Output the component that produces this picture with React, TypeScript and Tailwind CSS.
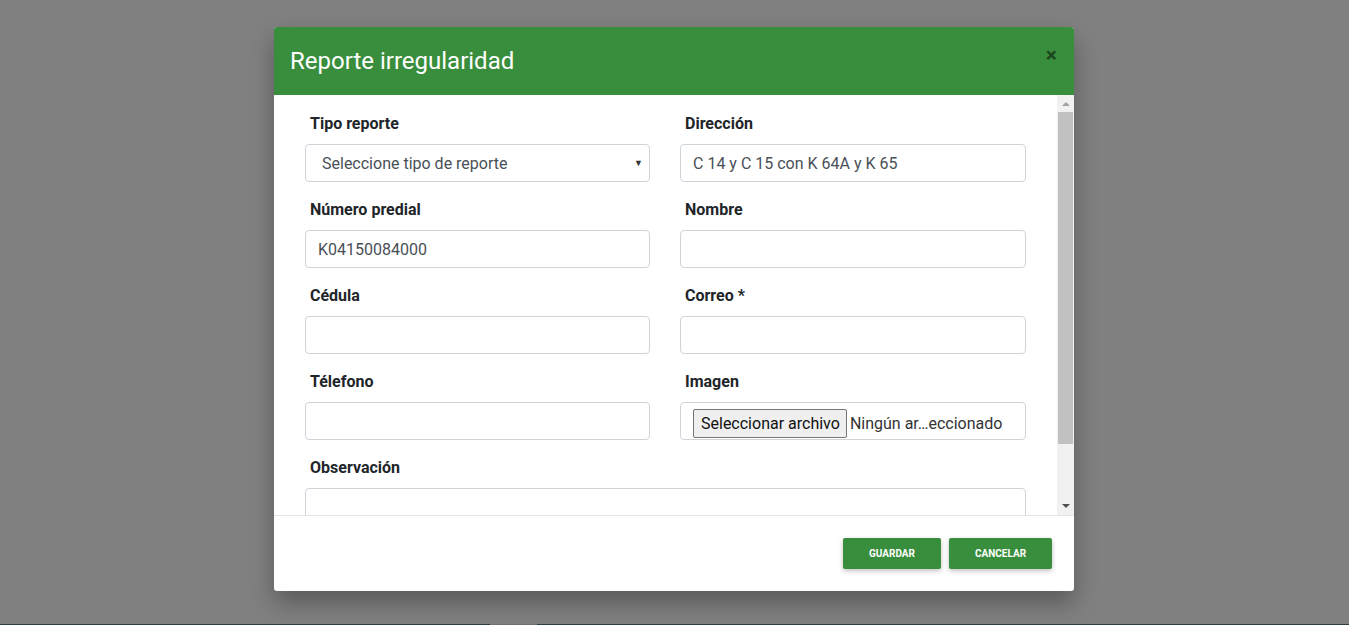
import React from "react";

const font = { fontFamily: "Roboto, 'Liberation Sans', sans-serif" };

function Label({ children }: { children: React.ReactNode }) {
  return (
    <div className="h-6 leading-6 pl-[5px] text-[16px] font-bold text-[#212529] mb-2">{children}</div>
  );
}

function Input({ value }: { value?: string }) {
  return (
    <div className="h-[38px] border border-[#ced4da] rounded-[4px] bg-white flex items-center px-3 pt-px text-[16px] text-[#495057]">
      {value}
    </div>
  );
}

function ScrollBar() {
  return (
    <div className="w-[17px] h-full bg-[#f1f1f1] flex flex-col items-center">
      <div className="h-[17px] w-full flex items-center justify-center">
        <svg width="8" height="5" viewBox="0 0 8 5">
          <path d="M0 5 L4 1 L8 5 Z" fill="#a3a3a3" />
        </svg>
      </div>
      <div className="w-[15px] h-[332px] bg-[#c1c1c1]" />
      <div className="flex-1" />
      <div className="h-[17px] w-full flex items-center justify-center">
        <svg width="8" height="5" viewBox="0 0 8 5">
          <path d="M0 0 L8 0 L4 4 Z" fill="#505050" />
        </svg>
      </div>
    </div>
  );
}

export default function App() {
  return (
    <div className="w-[1349px] h-[625px] bg-[#808080] flex flex-col overflow-hidden" style={font}>
      <div className="flex-1 flex pl-[274px] pt-[27px]">
        <div className="w-[800px] h-[564px] bg-white rounded-[3px] shadow-[0_12px_24px_rgba(0,0,0,0.3)] flex flex-col overflow-hidden">
          <div className="h-[68px] bg-[#388e3c] flex items-start pl-4 pr-[17px]">
            <div className="flex-1 text-white text-[24px] leading-[68px]">Reporte irregularidad</div>
            <div className="mt-[18px] text-[21px] font-bold leading-none text-black opacity-50">×</div>
          </div>
          <div className="h-[421px] flex border-b border-[#e5e5e5]">
            <div className="flex-1 overflow-hidden">
              <div className="pt-[17px] pl-[31px] pr-[31px] pb-4">
                <div className="grid grid-cols-[345px_346px] gap-x-[30px]">
                  <div className="mb-4">
                    <Label>Tipo reporte</Label>
                    <div className="h-[38px] border border-[#ced4da] rounded-[4px] bg-white flex items-center pl-4 pr-[6px] pt-px text-[16px] text-[#495057]">
                      <span className="flex-1">Seleccione tipo de reporte</span>
                      <span className="text-[9px] text-[#333]">▼</span>
                    </div>
                  </div>
                  <div className="mb-4">
                    <Label>Dirección</Label>
                    <Input value="C 14 y C 15 con K 64A y K 65" />
                  </div>
                  <div className="mb-4">
                    <Label>Número predial</Label>
                    <Input value="K04150084000" />
                  </div>
                  <div className="mb-4">
                    <Label>Nombre</Label>
                    <Input />
                  </div>
                  <div className="mb-4">
                    <Label>Cédula</Label>
                    <Input />
                  </div>
                  <div className="mb-4">
                    <Label>Correo *</Label>
                    <Input />
                  </div>
                  <div className="mb-4">
                    <Label>Télefono</Label>
                    <Input />
                  </div>
                  <div className="mb-4">
                    <Label>Imagen</Label>
                    <div className="h-[38px] border border-[#ced4da] rounded-[4px] bg-white flex items-start pt-[6px] px-3 text-[16px] text-[#333]">
                      <span className="h-[29px] pl-[7px] pr-[6px] flex items-center bg-[#efefef] border border-[#767676] rounded-[2px] text-[#111]">
                        Seleccionar archivo
                      </span>
                      <span className="ml-[3px] h-[29px] flex items-center">Ningún ar…eccionado</span>
                    </div>
                  </div>
                </div>
                <div>
                  <Label>Observación</Label>
                  <div className="h-[76px] border border-[#ced4da] rounded-[4px] bg-white" />
                </div>
              </div>
            </div>
            <ScrollBar />
          </div>
          <div className="flex-1 flex justify-end items-start pt-[22px] pr-[22px] gap-2">
            <button className="w-[98px] h-[31px] bg-[#388e3c] text-white text-[10px] font-bold rounded-[2px] shadow-[0_2px_5px_rgba(0,0,0,0.25)]">
              GUARDAR
            </button>
            <button className="w-[103px] h-[31px] bg-[#388e3c] text-white text-[10px] font-bold rounded-[2px] shadow-[0_2px_5px_rgba(0,0,0,0.25)]">
              CANCELAR
            </button>
          </div>
        </div>
      </div>
      <div className="h-px flex bg-[#2f3d44]">
        <div className="w-[490px]" />
        <div className="w-[47px] bg-[#6d7275]" />
      </div>
    </div>
  );
}
